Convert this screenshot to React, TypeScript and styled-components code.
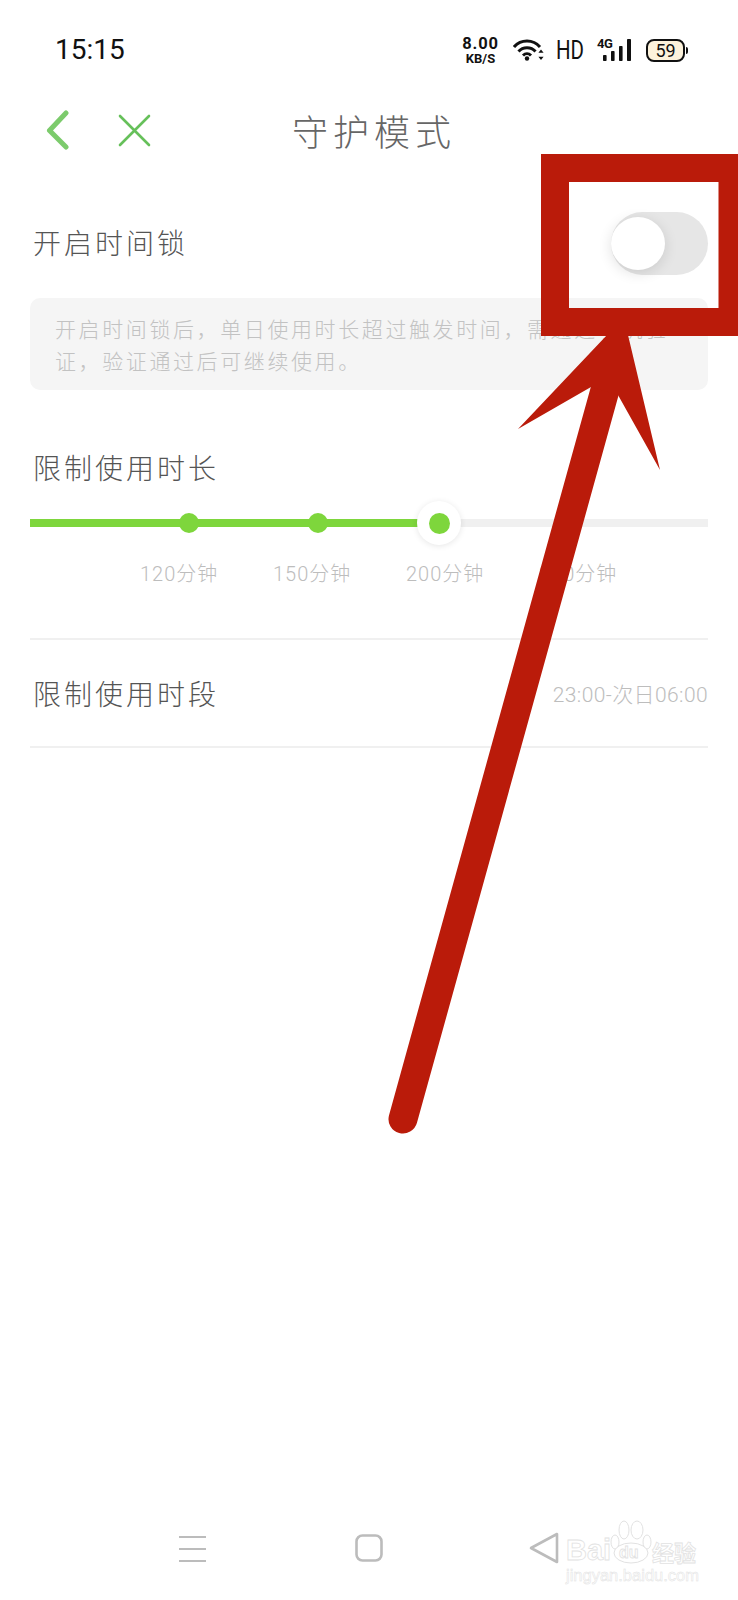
import React from "react";
import styled, { createGlobalStyle } from "styled-components";

const Global = createGlobalStyle`
  html, body { margin: 0; padding: 0; background: #fff; }
  body { font-family: "Noto Sans CJK SC", "Noto Sans", sans-serif; }
`;

const Page = styled.div`
  position: relative;
  width: 738px;
  height: 1600px;
  overflow: hidden;
  background: #fff;
`;

const StatusBar = styled.div`
  height: 100px;
  padding: 0 53px 0 55px;
  box-sizing: border-box;
  display: flex;
  align-items: center;
  justify-content: space-between;
  color: #111;
`;
const Clock = styled.div`
  font: 400 28px/1 Roboto, sans-serif;
`;
const StatusIcons = styled.div`
  display: flex;
  align-items: center;
`;
const Speed = styled.div`
  width: 37px;
  margin-right: 14px;
  display: flex;
  flex-direction: column;
  align-items: center;
  font-family: Roboto, sans-serif;
  font-weight: 700;
  white-space: nowrap;
`;
const SpeedValue = styled.span`
  font-size: 16.5px;
  line-height: 16px;
  letter-spacing: 0.8px;
`;
const SpeedUnit = styled.span`
  font-size: 13px;
  line-height: 13px;
`;
const Hd = styled.span`
  width: 28px;
  margin: 0 13px 0 11px;
  font: 400 25px/1 Roboto, sans-serif;
  display: inline-block;
  transform: scaleX(0.82);
  transform-origin: left center;
  white-space: nowrap;
`;
const Signal = styled.div`
  position: relative;
  width: 34px;
  height: 22px;
  margin-right: 15px;
`;
const FourG = styled.span`
  position: absolute;
  left: 0;
  top: -2px;
  font: 700 13px/13px Roboto, sans-serif;
  letter-spacing: -0.5px;
`;
const Battery = styled.div`
  position: relative;
  width: 35px;
  height: 19px;
  border: 2px solid #111;
  border-radius: 8px;
  background: #fdf3dc;
  font: 400 18px/19px Roboto, sans-serif;
  text-align: center;
  &::after {
    content: "";
    position: absolute;
    right: -5px;
    top: 6px;
    width: 2px;
    height: 7px;
    border-radius: 0 2px 2px 0;
    background: #111;
  }
`;

const NavBar = styled.div`
  height: 60px;
  padding-left: 46px;
  display: grid;
  grid-template-columns: 1fr auto 1fr;
  align-items: center;
`;
const NavIcons = styled.div`
  display: flex;
  align-items: center;
  gap: 48px;
`;
const Title = styled.h1`
  margin: 0 36px 0 0;
  font-size: 36px;
  line-height: 40px;
  font-weight: 300;
  letter-spacing: 5px;
  color: #666;
`;

const Content = styled.main`
  padding: 52px 30px 0 30px;
`;
const SwitchRow = styled.div`
  height: 63px;
  display: flex;
  align-items: center;
  justify-content: space-between;
`;
const RowLabel = styled.span<{ $lift?: boolean }>`
  padding-left: 3px;
  padding-bottom: ${(p) => (p.$lift ? 4 : 0)}px;
  font-size: 28px;
  line-height: 32px;
  font-weight: 300;
  letter-spacing: 3px;
  color: #555;
  white-space: nowrap;
`;
const Toggle = styled.div`
  position: relative;
  width: 97px;
  height: 63px;
  border-radius: 32px;
  background: #e6e6e6;
`;
const Knob = styled.div`
  position: absolute;
  left: 0;
  top: 5px;
  width: 54px;
  height: 53px;
  border-radius: 50%;
  background: #fff;
  box-shadow: 0 3px 14px rgba(0, 0, 0, 0.12);
`;
const Notice = styled.p`
  margin: 23px 0 0;
  height: 92px;
  box-sizing: border-box;
  padding: 14px 20px 0 25px;
  border-radius: 10px;
  background: #f5f5f5;
  font-size: 21px;
  line-height: 32px;
  font-weight: 300;
  letter-spacing: 2.6px;
  color: #c2c2c2;
`;
const SectionLabel = styled.div`
  margin-top: 60px;
  height: 38px;
  display: flex;
  align-items: center;
`;
const Track = styled.div`
  position: relative;
  height: 8px;
  margin-top: 31px;
  background: #f0f0f0;
`;
const TrackFill = styled.div`
  width: 409px;
  height: 100%;
  background: #7ed63c;
`;
const Stop = styled.div<{ $left: number }>`
  position: absolute;
  left: ${(p) => p.$left}px;
  top: -6px;
  width: 20px;
  height: 20px;
  margin-left: -10px;
  border-radius: 50%;
  background: #7ed63c;
`;
const Thumb = styled.div<{ $left: number }>`
  position: absolute;
  left: ${(p) => p.$left}px;
  top: -18px;
  width: 44px;
  height: 44px;
  margin-left: -22px;
  border-radius: 50%;
  background: #fff;
  box-shadow: 0 1px 6px rgba(0, 0, 0, 0.1);
  display: flex;
  align-items: center;
  justify-content: center;
  &::after {
    content: "";
    width: 21px;
    height: 21px;
    border-radius: 50%;
    background: #7ed63c;
  }
`;
const TickLabels = styled.div`
  display: flex;
  gap: 55px;
  margin-top: 33px;
  padding-left: 110px;
`;
const Tick = styled.span`
  width: 78px;
  font-family: Roboto, "Noto Sans CJK SC", sans-serif;
  font-size: 20px;
  line-height: 28px;
  font-weight: 300;
  letter-spacing: 1px;
  color: #bdbdbd;
  white-space: nowrap;
`;
const Divider = styled.div<{ $top: number }>`
  height: 2px;
  margin-top: ${(p) => p.$top}px;
  background: #f0f0f0;
`;
const ValueRow = styled.div`
  height: 106px;
  display: flex;
  align-items: center;
  justify-content: space-between;
`;
const RowValue = styled.span`
  font-family: Roboto, "Noto Sans CJK SC", sans-serif;
  font-size: 21px;
  font-weight: 300;
  letter-spacing: 0.4px;
  color: #bdbdbd;
  white-space: nowrap;
`;

const BottomNav = styled.nav`
  position: absolute;
  left: 0;
  right: 0;
  bottom: 0;
  height: 66px;
  padding-left: 179px;
  display: flex;
  align-items: flex-start;
  color: #bcbcbc;
`;
const NavButton = styled.div<{ $gap: number }>`
  margin-right: ${(p) => p.$gap}px;
  display: flex;
`;

const Annotation = styled.svg`
  position: absolute;
  left: 0;
  top: 0;
  width: 738px;
  height: 1600px;
  pointer-events: none;
`;

const Watermark = styled.div`
  position: absolute;
  left: 566px;
  top: 1518px;
  width: 134px;
  height: 68px;
  color: #fff;
  -webkit-text-stroke: 0.8px #e2e2e2;
`;
const WatermarkBrand = styled.span`
  position: absolute;
  left: 0;
  top: 16px;
  font: 700 29px/32px "Liberation Sans", sans-serif;
`;
const WatermarkDu = styled.span`
  position: absolute;
  left: 53px;
  top: 27px;
  font: 700 16px/16px "Liberation Sans", sans-serif;
`;
const WatermarkCn = styled.span`
  position: absolute;
  left: 86px;
  top: 20px;
  font: 700 22px/26px "Noto Sans CJK SC", sans-serif;
  white-space: nowrap;
`;
const WatermarkUrl = styled.span`
  position: absolute;
  left: 0;
  top: 48px;
  font: 400 16.5px/18px "Liberation Sans", sans-serif;
  -webkit-text-stroke: 0.5px #e2e2e2;
  white-space: nowrap;
`;
const Paw = styled.svg`
  position: absolute;
  left: 44px;
  top: 1px;
`;

const NOTICE_TEXT =
  "开启时间锁后\uFF0C单日使用时长超过触发时间\uFF0C需通过手机验证\uFF0C验证通过后可继续使用\u3002";

export default function App() {
  return (
    <Page>
      <Global />
      <StatusBar>
        <Clock>15:15</Clock>
        <StatusIcons>
          <Speed>
            <SpeedValue>8.00</SpeedValue>
            <SpeedUnit>KB/S</SpeedUnit>
          </Speed>
          <svg width="32" height="22" viewBox="0 0 32 22" fill="none" stroke="#111" strokeWidth="3">
            <path d="M1 8 C 8 0, 20 0, 27 8" />
            <path d="M5.5 12.5 C 10 7.5, 18 7.5, 22.5 12.5" />
            <path d="M10 16.5 C 12.5 14, 15.5 14, 18 16.5" />
            <circle cx="14" cy="19.5" r="2.2" fill="#111" stroke="none" />
            <path d="M28 10.5 l2.6 3.2 h-5.2 z M28 21 l2.6 -3.2 h-5.2 z" fill="#111" stroke="none" />
          </svg>
          <Hd>HD</Hd>
          <Signal>
            <FourG>4G</FourG>
            <svg width="34" height="22" viewBox="0 0 34 22" fill="#111" style={{ display: "block" }}>
              <rect x="6" y="16" width="3.6" height="6" rx="0.8" />
              <rect x="14" y="12" width="3.6" height="10" rx="0.8" />
              <rect x="22" y="7" width="3.6" height="15" rx="0.8" />
              <rect x="30" y="0" width="4" height="22" rx="0.8" />
            </svg>
          </Signal>
          <Battery>59</Battery>
        </StatusIcons>
      </StatusBar>

      <NavBar>
        <NavIcons>
          <svg width="24" height="40" viewBox="0 0 24 40" fill="none" stroke="#7ccb6c" strokeWidth="5" strokeLinecap="round" strokeLinejoin="round">
            <path d="M20 3 L3.5 20.5 L20 37" />
          </svg>
          <svg width="33" height="33" viewBox="0 0 33 33" fill="none" stroke="#66c05a" strokeWidth="2.6" strokeLinecap="round">
            <path d="M2 2 L31 31 M31 2 L2 31" />
          </svg>
        </NavIcons>
        <Title>守护模式</Title>
        <span />
      </NavBar>

      <Content>
        <SwitchRow>
          <RowLabel $lift>开启时间锁</RowLabel>
          <Toggle>
            <Knob />
          </Toggle>
        </SwitchRow>
        <Notice>{NOTICE_TEXT}</Notice>

        <SectionLabel>
          <RowLabel $lift>限制使用时长</RowLabel>
        </SectionLabel>
        <Track>
          <TrackFill />
          <Stop $left={159} />
          <Stop $left={288} />
          <Thumb $left={409} />
        </Track>
        <TickLabels>
          <Tick>120分钟</Tick>
          <Tick>150分钟</Tick>
          <Tick>200分钟</Tick>
          <Tick>240分钟</Tick>
        </TickLabels>
        <Divider $top={50} />
        <ValueRow>
          <RowLabel>限制使用时段</RowLabel>
          <RowValue>23:00-次日06:00</RowValue>
        </ValueRow>
        <Divider $top={0} />
      </Content>

      <BottomNav>
        <NavButton $gap={149}>
          <svg width="27" height="28" viewBox="0 0 27 28" stroke="currentColor" strokeWidth="2">
            <path d="M0 3 H27 M0 15 H27 M0 27 H27" />
          </svg>
        </NavButton>
        <NavButton $gap={146}>
          <svg width="28" height="28" viewBox="0 0 28 28" fill="none" stroke="currentColor" strokeWidth="2.6">
            <rect x="1.5" y="1.5" width="25" height="25" rx="6" />
          </svg>
        </NavButton>
        <NavButton $gap={0}>
          <svg width="30" height="32" viewBox="0 0 30 32" fill="none" stroke="currentColor" strokeWidth="2.6" strokeLinejoin="round" style={{ marginTop: -2 }}>
            <path d="M28 2 V30 L2 16 Z" />
          </svg>
        </NavButton>
      </BottomNav>

      <Watermark>
        <Paw width="46" height="46" viewBox="0 0 46 46" fill="#fff" stroke="#e2e2e2" strokeWidth="1">
          <ellipse cx="5" cy="23" rx="4" ry="7" />
          <ellipse cx="14" cy="11" rx="5" ry="9" />
          <ellipse cx="27" cy="11" rx="6" ry="9" />
          <ellipse cx="37" cy="23" rx="4" ry="7" />
          <ellipse cx="21" cy="34" rx="17" ry="10" />
        </Paw>
        <WatermarkBrand>Bai</WatermarkBrand>
        <WatermarkDu>du</WatermarkDu>
        <WatermarkCn>经验</WatermarkCn>
        <WatermarkUrl>jingyan.baidu.com</WatermarkUrl>
      </Watermark>

      <Annotation viewBox="0 0 738 1600">
        <path fillRule="evenodd" fill="#ba1b0a" d="M541 154 H738 V336 H541 Z M569 182 V308 H718.5 V182 Z" />
        <path d="M403 1119 L605 390" stroke="#ba1b0a" strokeWidth="29" strokeLinecap="round" fill="none" />
        <polygon fill="#ba1b0a" points="591,387 518,429 607,335 628,335 660,470 618,395" />
      </Annotation>
    </Page>
  );
}
